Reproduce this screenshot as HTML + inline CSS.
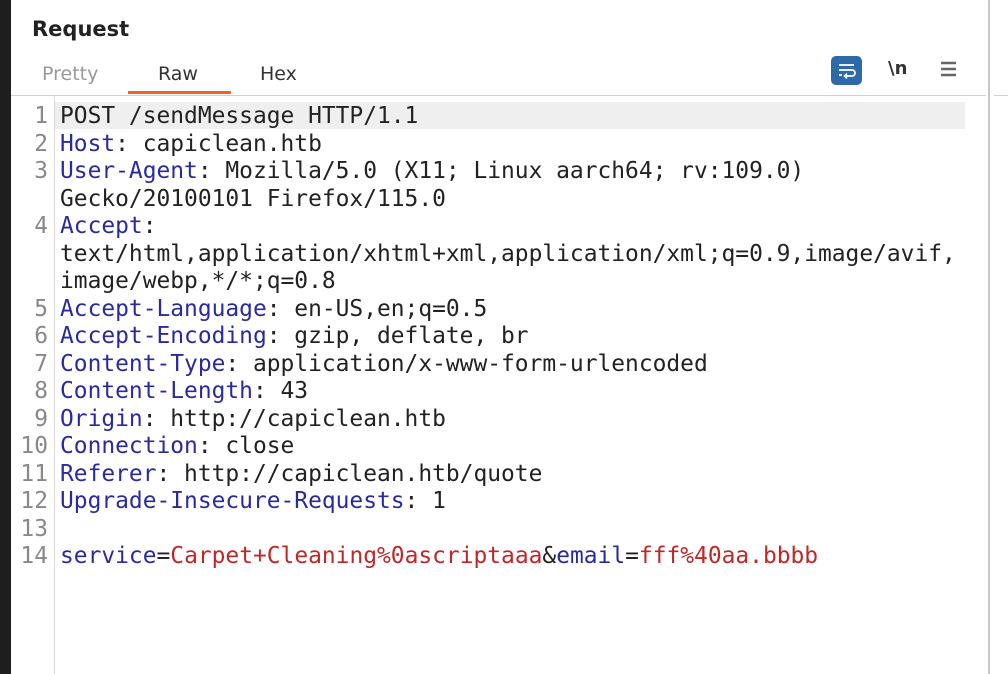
<!DOCTYPE html>
<html><head><meta charset="utf-8"><style>
body{margin:0;width:1008px;height:674px;background:#fff;position:relative;overflow:hidden;font-family:"DejaVu Sans","Liberation Sans",sans-serif}
.lb{position:absolute;left:0;top:0;width:11px;height:674px;background:#1e1e1e}
.vr{position:absolute;left:988px;top:0;width:2px;height:674px;background:#c8c8c8}
.title{position:absolute;left:32px;top:17px;font-size:21px;font-weight:bold;color:#222}
.tab{position:absolute;top:63px;font-size:19px;color:#333}
.ul{position:absolute;left:128px;top:91px;width:103px;height:3px;background:#f0602a}
.sep{position:absolute;left:11px;top:95px;width:975px;height:1px;background:#d0d0d0}
.sep2{position:absolute;left:994px;top:95px;width:14px;height:1px;background:#d0d0d0}
.gut{position:absolute;left:54px;top:96px;width:1px;height:578px;background:#d8d8d8}
.hl{position:absolute;left:55px;top:102px;width:910px;height:27px;background:#efefef}
.code{position:absolute;top:103px;font-family:"DejaVu Sans Mono","Liberation Mono",monospace;font-size:22.9px;line-height:27.5px;white-space:pre;color:#222}
.nums{left:14px;width:34px;text-align:right;color:#888}
.txt{left:60px}
.k{color:#2a2aa0}.v{color:#c02828}
.icon{position:absolute;left:831px;top:56px;width:31px;height:29px;background:#2e6aa8;border-radius:5px}
</style></head><body>
<div class="lb"></div><div class="vr"></div>
<div class="title">Request</div>
<div class="tab" style="left:42px;color:#999">Pretty</div>
<div class="tab" style="left:158px">Raw</div>
<div class="tab" style="left:260px">Hex</div>
<div class="ul"></div>
<div class="icon"><svg width="31" height="29" viewBox="0 0 31 29"><path d="M8 9h15M8 14h13a3 3 0 0 1 0 6h-6M8 19h3" stroke="#e8eef6" stroke-width="2" fill="none"/><path d="M16 17.5l-2.5 2.5 2.5 2.5" stroke="#e8eef6" stroke-width="1.6" fill="none"/></svg></div>
<div style="position:absolute;left:888px;top:58px;font-size:18px;font-weight:bold;color:#333">\n</div>
<svg style="position:absolute;left:940px;top:61px" width="18" height="16"><path d="M1 2h15M1 8h15M1 14h15" stroke="#666" stroke-width="2.5"/></svg>
<div class="sep"></div><div class="sep2"></div>
<div class="gut"></div><div class="hl"></div>
<div class="code nums">1
2
3

4


5
6
7
8
9
10
11
12
13
14</div>
<div class="code txt">POST /sendMessage HTTP/1.1
<span class="k">Host</span>: capiclean.htb
<span class="k">User-Agent</span>: Mozilla/5.0 (X11; Linux aarch64; rv:109.0)
Gecko/20100101 Firefox/115.0
<span class="k">Accept</span>:
text/html,application/xhtml+xml,application/xml;q=0.9,image/avif,
image/webp,*/*;q=0.8
<span class="k">Accept-Language</span>: en-US,en;q=0.5
<span class="k">Accept-Encoding</span>: gzip, deflate, br
<span class="k">Content-Type</span>: application/x-www-form-urlencoded
<span class="k">Content-Length</span>: 43
<span class="k">Origin</span>: http://capiclean.htb
<span class="k">Connection</span>: close
<span class="k">Referer</span>: http://capiclean.htb/quote
<span class="k">Upgrade-Insecure-Requests</span>: 1

<span class="k">service</span>=<span class="v">Carpet+Cleaning%0ascriptaaa</span>&amp;<span class="k">email</span>=<span class="v">fff%40aa.bbbb</span></div>
</body></html>
